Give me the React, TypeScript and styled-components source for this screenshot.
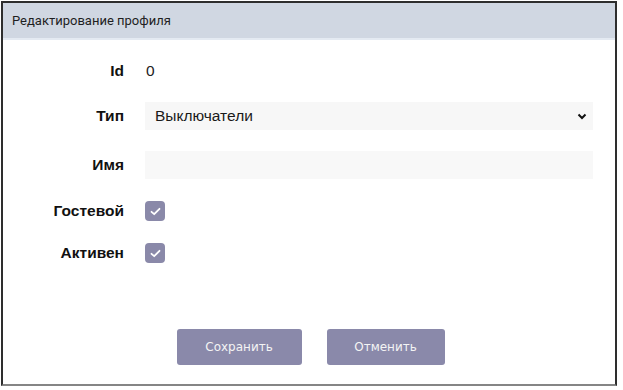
import styled, { createGlobalStyle } from "styled-components";

const GlobalStyle = createGlobalStyle`
  body {
    margin: 0;
    background: #ffffff;
    font-family: "Liberation Sans", Arial, sans-serif;
  }
`;

const Frame = styled.section`
  margin: 1px 0 0 1px;
  width: 616px;
  height: 385px;
  box-sizing: border-box;
  border: 2px solid #2e2e2e;
  border-bottom-color: #858585;
  display: flex;
  flex-direction: column;
`;

const Header = styled.header`
  height: 35px;
  background: #d0d7e2;
  border-bottom: 2px solid #e4eaf2;
  display: flex;
  align-items: center;
  padding-left: 9px;
  font-family: Roboto, "Liberation Sans", sans-serif;
  font-size: 13px;
  color: #1f1f1f;
`;

const Form = styled.div`
  padding-top: 21px;
  display: flex;
  flex-direction: column;
`;

const Row = styled.div<{ $h: number; $gap: number }>`
  display: grid;
  grid-template-columns: 121px 448px;
  column-gap: 21px;
  align-items: center;
  height: ${(p) => p.$h}px;
  margin-bottom: ${(p) => p.$gap}px;
`;

const Label = styled.label`
  text-align: right;
  font-weight: bold;
  font-size: 15.5px;
  color: #111;
`;

const Value = styled.span`
  font-size: 15.5px;
  color: #222;
  padding-left: 1px;
`;

const SelectBox = styled.div`
  height: 28px;
  background: #f7f7f7;
  display: flex;
  align-items: center;
  justify-content: space-between;
  padding: 0 6px 0 10px;
  font-size: 15.5px;
  color: #1a1a1a;
`;

const Input = styled.input`
  height: 28px;
  box-sizing: border-box;
  border: none;
  background: #f8f8f8;
  outline: none;
  font-size: 15px;
`;

const Check = styled.span`
  width: 20px;
  height: 20px;
  border-radius: 4px;
  background: #8a89a9;
  display: flex;
  align-items: center;
  justify-content: center;
`;

const Buttons = styled.div`
  margin-top: 66px;
  display: flex;
  justify-content: center;
  gap: 25px;
  padding-left: 3px;
`;

const Button = styled.button<{ $w: number }>`
  width: ${(p) => p.$w}px;
  height: 36px;
  border: none;
  border-radius: 3px;
  background: #8a89aa;
  color: #f4f4f4;
  font-family: "DejaVu Sans", Verdana, sans-serif;
  font-size: 12px;
`;

const Tick = () => (
  <svg width="11" height="9" viewBox="0 0 11 9">
    <path d="M1.5 4.8 L4.2 7.2 L9.5 1.8" fill="none" stroke="#fff" strokeWidth="1.8" strokeLinecap="round" strokeLinejoin="round" />
  </svg>
);

const Chevron = () => (
  <svg width="10" height="7" viewBox="0 0 10 7">
    <path d="M1.5 1.5 L5 5 L8.5 1.5" fill="none" stroke="#111" strokeWidth="2" />
  </svg>
);

export default function App() {
  return (
    <>
      <GlobalStyle />
      <Frame>
        <Header>Редактирование профиля</Header>
        <Form>
          <Row $h={20} $gap={21}>
            <Label>Id</Label>
            <Value>0</Value>
          </Row>
          <Row $h={28} $gap={21}>
            <Label>Тип</Label>
            <SelectBox>
              Выключатели
              <Chevron />
            </SelectBox>
          </Row>
          <Row $h={28} $gap={22}>
            <Label>Имя</Label>
            <Input />
          </Row>
          <Row $h={20} $gap={22}>
            <Label>Гостевой</Label>
            <Check>
              <Tick />
            </Check>
          </Row>
          <Row $h={20} $gap={0}>
            <Label>Активен</Label>
            <Check>
              <Tick />
            </Check>
          </Row>
        </Form>
        <Buttons>
          <Button $w={125}>Сохранить</Button>
          <Button $w={118}>Отменить</Button>
        </Buttons>
      </Frame>
    </>
  );
}
